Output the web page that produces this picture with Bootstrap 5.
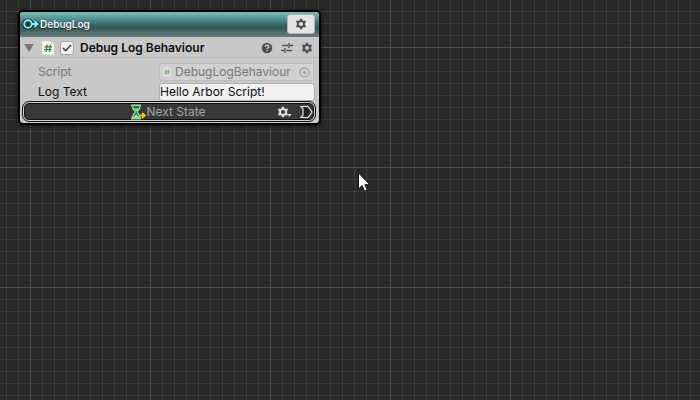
<!DOCTYPE html>
<html lang="en">
<head>
<meta charset="utf-8">
<meta name="viewport" content="width=device-width, initial-scale=1">
<title>Arbor Editor</title>
<link href="https://cdn.jsdelivr.net/npm/bootstrap@5.3.0/dist/css/bootstrap.min.css" rel="stylesheet">
<style>
body{font:12px/16px Inter,"Liberation Sans",sans-serif;color:#0b0b0b;background:#292929}
/* graph canvas: 12px minor grid, 120px major grid */
.graph{padding:10px 18px;overflow:hidden;
background-image:linear-gradient(90deg,#4d4d4d 1px,transparent 1px),linear-gradient(#4d4d4d 1px,transparent 1px),linear-gradient(90deg,#3b3b3b 1px,transparent 1px),linear-gradient(#3b3b3b 1px,transparent 1px);
background-size:120px 120px,120px 120px,12px 12px,12px 12px;background-position:30px 47px,30px 47px,6px 11px,6px 11px}
.node{width:303px;border:2px solid #000;border-radius:5px;background:#c8c8c8;box-shadow:0 1px 4px #000a}
.node-head{height:25px;padding:0 4px 1px 2px;border-radius:3px 3px 0 0;background:linear-gradient(#7fb9b6,#5f9e9c 20%,#38696a 50%,#345655 64%,#6d7f7e 100%)}
.node-title{font-size:10px;font-weight:600;line-height:16px;color:#f2f2f2;text-shadow:0 1px 1px #0008}
.head-btn{width:28px;height:20px;background:#e4e4e4;border:1px solid #b5b5b5;border-radius:3px}
.bhv{height:21px;padding:1px 6px 0 4px;border-bottom:1px solid #b9b9b9}
.bhv-title{margin-left:6px;font-size:12px;font-weight:600;line-height:16px}
.plain{background:none;border:0}
.icon{color:#505050}
.tick{appearance:none;width:14px;height:14px;margin:0 0 0 6px;border:1px solid #a6a6a6;border-radius:3px;background:#f0f0f0}
.tick:checked{background:#f0f0f0 url("data:image/svg+xml,%3Csvg xmlns='http://www.w3.org/2000/svg' viewBox='0 0 12 12'%3E%3Cpath d='M2 6l2.700 2.700L10 3' fill='none' stroke='%23404040' stroke-width='1.6'/%3E%3C/svg%3E")}
.props{padding:4px 4px 0 18px}
.prop{height:20px}
.prop-label{width:121px}
.field{height:18px;padding:0 0 2px;border:1px solid #aeaeae;border-radius:3px;background:#f0f0f0;color:#0b0b0b;min-width:0}
.field-off{padding:0 4px 0 3px;background:#d1d1d1;border-color:#bcbcbc}
.off{color:#777}
.state{height:19px;margin:0 4px 2px 3px;padding:0 1px 0 4px;background:#383838;border:1px solid #d0d0d0;border-radius:6px;outline:1px solid #111;box-shadow:inset 0 0 0 1px #111;color:#a5a5a5}
.pointer{left:358px;top:172px;pointer-events:none}
</style>
</head>
<body>
<main class="graph position-relative min-vh-100">
<section class="node" aria-label="DebugLog state">
<header class="node-head d-flex align-items-center">
<svg class="flex-shrink-0" width="18" height="12" viewBox="0 0 18 12" aria-hidden="true"><g fill="none" stroke="#102d30" stroke-width="3.600"><circle cx="6" cy="6" r="3.800"/><path d="M10 6h5M12.500 3l3 3-3 3"/></g><g fill="none" stroke="#8ff0f4" stroke-width="1.900"><circle cx="6" cy="6" r="3.800"/><path d="M10 6h5.500M12.500 3l3 3-3 3"/></g><circle cx="6" cy="6" r="1.500" fill="#102d30"/></svg>
<span class="node-title flex-grow-1">DebugLog</span>
<button type="button" class="head-btn icon d-flex align-items-center justify-content-center p-0" aria-label="State settings"><svg width="12" height="12" viewBox="0 0 12 12"><use href="#gear"/></svg></button>
</header>
<div class="bhv d-flex align-items-center">
<button type="button" class="plain p-0 d-flex" aria-label="Collapse"><svg width="10" height="10" viewBox="0 0 10 10"><path d="M0 1h10L5 9z" fill="#777"/></svg></button>
<svg class="ms-2 flex-shrink-0" width="12" height="14" viewBox="0 0 12 14" aria-hidden="true"><path d="M.5.500h8l3 3v10H.5z" fill="#f7f7f7" stroke="#e8e8e8"/><path d="M5 3.500L4 11M8.500 3.500l-1 7.500M2.500 5.800h7.500M2 8.600h7.500" stroke="#2f8338" stroke-width="1.300"/></svg>
<input id="enabled" class="tick flex-shrink-0" type="checkbox" checked>
<label for="enabled" class="bhv-title flex-grow-1">Debug Log Behaviour</label>
<div class="d-flex gap-2 icon">
<button type="button" class="plain p-0 d-flex" aria-label="Help"><svg width="12" height="12" viewBox="0 0 12 12"><circle cx="6" cy="6" r="5.300" fill="#505050"/><path d="M4.300 4.700c0-2.200 3.500-2.200 3.500 0 0 1.200-1.700 1.100-1.700 2.400M6.100 8v1.300" fill="none" stroke="#d0d0d0" stroke-width="1.300"/></svg></button>
<button type="button" class="plain p-0 d-flex" aria-label="Presets"><svg width="12" height="12" viewBox="0 0 12 12"><path d="M1 3.500h6M9 3.500h3M8 1v5M0 8.500h3M5.500 8.500H11M4 6v5" fill="none" stroke="#505050" stroke-width="1.300"/></svg></button>
<button type="button" class="plain icon p-0 d-flex" aria-label="Behaviour settings"><svg width="12" height="12" viewBox="0 0 12 12"><use href="#gear"/></svg></button>
</div>
</div>
<div class="props">
<div class="prop d-flex align-items-center off">
<span class="prop-label flex-shrink-0" id="script-label">Script</span>
<button type="button" disabled class="field field-off off d-flex align-items-center flex-grow-1" aria-labelledby="script-label">
<svg class="me-1 flex-shrink-0" width="8" height="10" viewBox="0 0 12 14" aria-hidden="true"><path d="M.5.500h8l3 3v10H.5z" fill="#e4e4e4" stroke="#dadada"/><path d="M5 3.500L4 11M8.500 3.500l-1 7.500M2.500 5.800h7.500M2 8.600h7.500" stroke="#80ac84" stroke-width="1.500"/></svg>
<span class="flex-grow-1 text-start">DebugLogBehaviour</span>
<svg width="11" height="11" viewBox="0 0 11 11" aria-hidden="true"><circle cx="5.500" cy="5.500" r="4.600" fill="none" stroke="#929292"/><circle cx="5.500" cy="5.500" r="1.300" fill="#929292"/></svg>
</button>
</div>
<div class="prop d-flex align-items-center">
<label class="prop-label flex-shrink-0" for="log-text">Log Text</label>
<input id="log-text" type="text" class="field flex-grow-1" value="Hello Arbor Script!">
</div>
</div>
<div class="state d-flex align-items-center">
<div class="flex-grow-1 d-flex align-items-center justify-content-center ps-4 ms-2">
<svg width="15" height="16" viewBox="0 0 15 16" aria-hidden="true"><path d="M0 1.500h10M0 14.500h10" stroke="#8fe09a" stroke-width="1.800"/><path d="M1.500 2.500c0 3 2.700 4 2.700 5.500s-2.700 2.500-2.700 5.500h7.500c0-3-2.700-4-2.700-5.500S9 5.500 9 2.500" fill="#28633a" stroke="#8fe09a" stroke-width="1.400"/><path d="M3 4.500h4.500L5.200 7.500zM3 13l2.200-3 2.300 3z" fill="#a0edaa"/><path d="M8 11.500h5M11 9l2.800 2.500L11 14" fill="none" stroke="#ffc512" stroke-width="1.700"/></svg>
<span>Next State</span>
</div>
<button type="button" class="plain p-0 d-flex me-2" aria-label="Transition settings"><svg width="15" height="12" viewBox="0 0 15 12"><g color="#dcdcdc"><use href="#gear"/></g><path d="M10.500 8h4l-2 3z" fill="#dcdcdc"/></svg></button>
<button type="button" class="plain p-0 d-flex" aria-label="Connect transition"><svg width="13" height="14" viewBox="0 0 13 14"><path d="M1 1.500h7l4 5.500-4 5.500H1L3 10V4z" fill="#222" stroke="#f0f0f0" stroke-width="1.200"/></svg></button>
</div>
</section>
<svg class="pointer position-absolute" width="14" height="21" viewBox="0 0 14 21" aria-hidden="true"><path d="M.5 1v16l3.600-3.400 2.400 5.600 2.800-1.200-2.400-5.300h5z" fill="#fff" stroke="#10131c"/></svg>
</main>
<svg class="d-none" aria-hidden="true"><defs><g id="gear"><path d="M5 .8h2l.4 1.500 1.200.6L10 2.300l1 1.700-1 1.200v1.600l1 1.200-1 1.700-1.400-.5-1.200.6-.4 1.500H5l-.4-1.500-1.200-.6L2 9.700 1 8l1-1.200V5.200L1 4l1-1.700 1.400.6 1.200-.6zM6 4a2 2 0 1 0 0 4 2 2 0 0 0 0-4z" fill="currentColor" fill-rule="evenodd"/></g></defs></svg>
<script src="https://cdn.jsdelivr.net/npm/bootstrap@5.3.0/dist/js/bootstrap.bundle.min.js"></script>
</body>
</html>
